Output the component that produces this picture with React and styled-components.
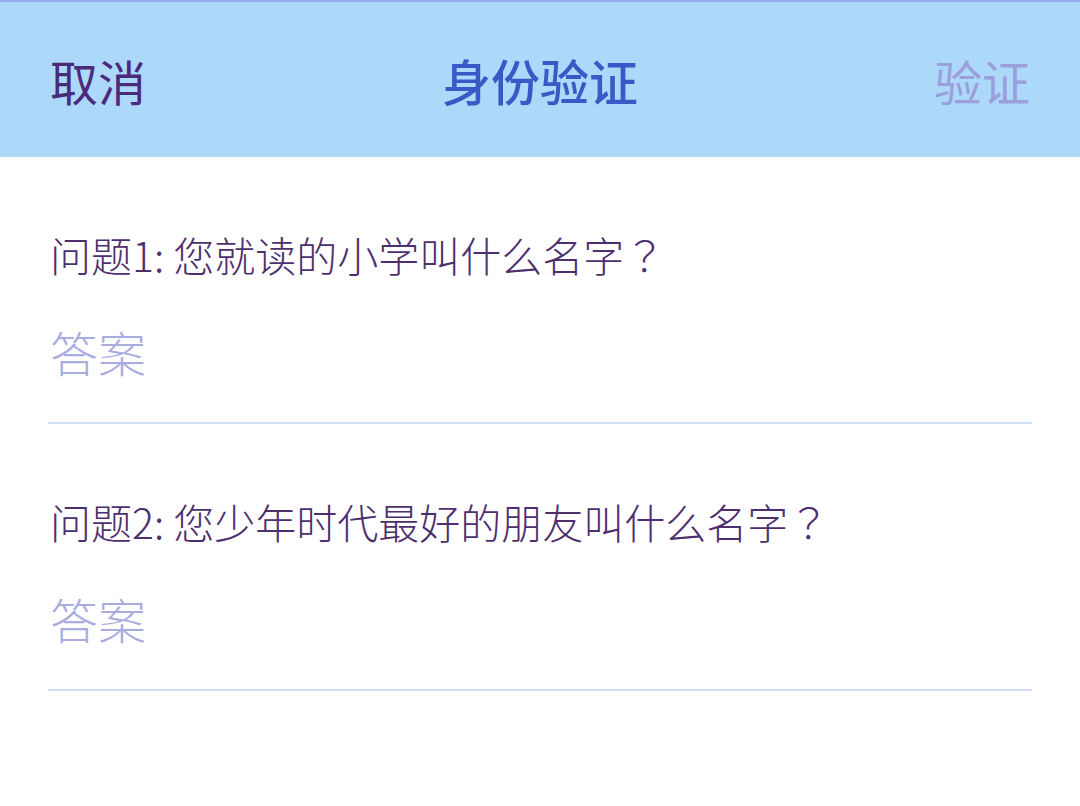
import React from "react";
import styled, { createGlobalStyle } from "styled-components";

const GlobalStyle = createGlobalStyle`
  html, body {
    margin: 0;
    padding: 0;
    background: #ffffff;
  }
  body {
    font-family: "Noto Sans CJK SC", sans-serif;
  }
`;

const Page = styled.div`
  width: 1080px;
  height: 806px;
  background: #ffffff;
  overflow: hidden;
`;

const Header = styled.header`
  display: flex;
  align-items: center;
  justify-content: space-between;
  height: 155px;
  padding: 0 50px;
  border-top: 2px solid #93a9ea;
  background: #acd9fa;
  position: relative;
`;

const HeaderButton = styled.button`
  border: none;
  background: none;
  padding: 0;
  font-family: "Noto Sans CJK SC", sans-serif;
  font-size: 48px;
  font-weight: 400;
  color: ${(p) => (p.disabled ? "#9b9fdc" : "#4b2a7c")};
  line-height: 1;
  cursor: pointer;
`;

const Title = styled.h1`
  position: absolute;
  left: 0;
  right: 0;
  margin: 0;
  text-align: center;
  pointer-events: none;
  font-family: "Noto Sans CJK SC", sans-serif;
  font-size: 49px;
  font-weight: 500;
  color: #3b59c6;
  line-height: 1;
`;

const Form = styled.form`
  display: flex;
  flex-direction: column;
  padding: 0 48px;
`;

const Field = styled.div`
  display: flex;
  flex-direction: column;
  border-bottom: 2px solid #cfe0f2;
`;

const Question = styled.label`
  margin-top: 72px;
  font-family: "Noto Sans CJK SC", sans-serif;
  font-size: 41px;
  font-weight: 300;
  line-height: 50px;
  color: #4e2f6e;
  padding-left: 2px;
`;

const Mark = styled.span`
  font-family: "Noto Sans CJK TC", sans-serif;
`;

const Answer = styled.input`
  margin-top: 43px;
  margin-bottom: 42px;
  height: 58px;
  border: none;
  outline: none;
  padding: 0 0 0 2px;
  background: transparent;
  font-family: "Noto Sans CJK SC", sans-serif;
  font-size: 48px;
  font-weight: 300;
  color: #4e2f6e;

  &::placeholder {
    color: #a9acdf;
  }
`;

const questions = [
  "问题1: 您就读的小学叫什么名字",
  "问题2: 您少年时代最好的朋友叫什么名字",
];

export default function App() {
  return (
    <Page>
      <GlobalStyle />
      <Header>
        <HeaderButton>取消</HeaderButton>
        <Title>身份验证</Title>
        <HeaderButton disabled>验证</HeaderButton>
      </Header>
      <Form>
        {questions.map((q, i) => (
          <Field key={i}>
            <Question htmlFor={`answer-${i}`}>
              {q}
              <Mark>？</Mark>
            </Question>
            <Answer id={`answer-${i}`} placeholder="答案" />
          </Field>
        ))}
      </Form>
    </Page>
  );
}
